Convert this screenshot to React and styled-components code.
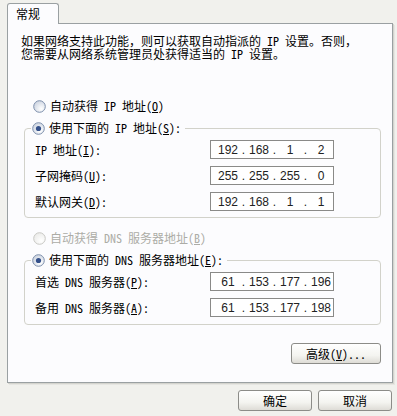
import React from "react";
import styled, { createGlobalStyle } from "styled-components";

const GlobalStyle = createGlobalStyle`
  html, body {
    margin: 0;
    padding: 0;
    background: #f1f1ed;
  }
  body {
    font-family: "Noto Sans Mono CJK SC", "Noto Sans CJK SC", sans-serif;
    font-size: 12px;
    color: #000;
  }
`;

const Window = styled.div`
  width: 397px;
  height: 416px;
  box-sizing: border-box;
  padding-top: 3px;
  overflow: hidden;
`;

const TabStrip = styled.div`
  display: flex;
  padding-left: 7px;
  height: 20px;
`;

const Tab = styled.div`
  position: relative;
  z-index: 1;
  width: 52px;
  height: 21px;
  box-sizing: border-box;
  border: 1px solid #9aa0a2;
  border-bottom: none;
  border-radius: 3px 3px 0 0;
  background: #fcfcfe;
  padding-left: 8px;
  line-height: 19px;
`;

const Panel = styled.div`
  margin-left: 7px;
  width: 386px;
  height: 360px;
  box-sizing: border-box;
  border: 1px solid #9aa0a2;
  background: #fcfcfe;
  box-shadow: 1px 1px 0 #d4d4ce, 2px 2px 0 #e6e6e2;
  display: flex;
  flex-direction: column;
  padding-top: 10px;
`;

const Description = styled.div`
  padding-left: 13px;
  line-height: 13px;
  white-space: nowrap;
`;

const OptionRow = styled.label`
  display: flex;
  align-items: center;
  gap: 4px;
  height: 14px;
  line-height: 14px;
  padding-left: 25px;
  margin-top: ${(p) => p.$top}px;
  color: ${(p) => (p.$disabled ? "#acaca6" : "#000")};
  white-space: nowrap;
`;

const GroupBox = styled.fieldset`
  margin: ${(p) => p.$top}px 0 0 16px;
  width: 357px;
  box-sizing: border-box;
  border: 1px solid #d2d2ca;
  border-radius: 4px;
  padding: 5px 0 ${(p) => p.$bottom}px 6px;
  min-width: 0;
`;

const Legend = styled.legend`
  display: flex;
  align-items: center;
  gap: 4px;
  height: 14px;
  line-height: 14px;
  padding: 0 4px 0 1px;
  white-space: nowrap;
`;

const FieldGrid = styled.div`
  display: grid;
  grid-template-columns: 175px 124px;
  row-gap: 7px;
  padding-left: 4px;
  align-items: center;
`;

const FieldLabel = styled.span`
  white-space: nowrap;
`;

const IpBox = styled.div`
  display: flex;
  align-items: center;
  height: 19px;
  box-sizing: border-box;
  border: 1px solid #8a8a88;
  background: #fff;
  padding-left: 5px;
  font-family: "Liberation Sans", Arial, sans-serif;
  font-size: 12px;
  color: #222;
`;

const Octet = styled.span`
  width: 24px;
  text-align: center;
`;

const Dot = styled.span`
  width: 7px;
  text-align: center;
`;

const Button = styled.button`
  width: ${(p) => p.$w}px;
  height: 21px;
  box-sizing: border-box;
  border: 1px solid #8c8c88;
  border-radius: 3px;
  background: linear-gradient(#ffffff, #f4f4f0 60%, #dedcd6);
  font-family: inherit;
  font-size: 12px;
  color: #000;
  padding: 0;
  line-height: 19px;
`;

const AdvancedRow = styled.div`
  display: flex;
  justify-content: flex-end;
  margin-top: 18px;
  padding-right: 11px;
`;

const Footer = styled.div`
  display: flex;
  justify-content: flex-end;
  gap: 6px;
  margin-top: 7px;
  padding-right: 5px;
`;

function Radio({ checked, disabled }) {
  const stroke = disabled ? "#c8c8c4" : "#7d8fac";
  const id = disabled ? "rgd" : "rg";
  return (
    <svg width="13" height="13" viewBox="0 0 13 13">
      <defs>
        <radialGradient id={id} cx="0.65" cy="0.7" r="0.7">
          <stop offset="0" stopColor="#ffffff" />
          <stop offset="1" stopColor={disabled ? "#ececea" : "#cfd6e2"} />
        </radialGradient>
      </defs>
      <circle cx="6.5" cy="6.5" r="5.8" fill={`url(#${id})`} stroke={stroke} />
      {checked && <circle cx="6.5" cy="6.5" r="2.6" fill="#34508a" />}
    </svg>
  );
}

function IpField({ value }) {
  const parts = value.split(".");
  return (
    <IpBox>
      {parts.map((p, i) => (
        <React.Fragment key={i}>
          {i > 0 && <Dot>.</Dot>}
          <Octet>{p}</Octet>
        </React.Fragment>
      ))}
    </IpBox>
  );
}

const ipRows = [
  { label: "IP 地址", key: "I", value: "192.168.1.2" },
  { label: "子网掩码", key: "U", value: "255.255.255.0" },
  { label: "默认网关", key: "D", value: "192.168.1.1" },
];

const dnsRows = [
  { label: "首选 DNS 服务器", key: "P", value: "61.153.177.196" },
  { label: "备用 DNS 服务器", key: "A", value: "61.153.177.198" },
];

function Fields({ rows }) {
  return (
    <FieldGrid>
      {rows.map(({ label, key, value }) => (
        <React.Fragment key={key}>
          <FieldLabel>
            {label}(<u>{key}</u>):
          </FieldLabel>
          <IpField value={value} />
        </React.Fragment>
      ))}
    </FieldGrid>
  );
}

export default function App() {
  return (
    <Window>
      <GlobalStyle />
      <TabStrip>
        <Tab>常规</Tab>
      </TabStrip>
      <Panel>
        <Description>
          <div>如果网络支持此功能，则可以获取自动指派的 IP 设置。否则，</div>
          <div>您需要从网络系统管理员处获得适当的 IP 设置。</div>
        </Description>
        <OptionRow $top={39}>
          <Radio />
          <span>
            自动获得 IP 地址(<u>O</u>)
          </span>
        </OptionRow>
        <GroupBox $top={8} $bottom={6}>
          <Legend>
            <Radio checked />
            <span>
              使用下面的 IP 地址(<u>S</u>):
            </span>
          </Legend>
          <Fields rows={ipRows} />
        </GroupBox>
        <OptionRow $top={13} $disabled>
          <Radio disabled />
          <span>
            自动获得 DNS 服务器地址(<u>B</u>)
          </span>
        </OptionRow>
        <GroupBox $top={8} $bottom={7}>
          <Legend>
            <Radio checked />
            <span>
              使用下面的 DNS 服务器地址(<u>E</u>):
            </span>
          </Legend>
          <Fields rows={dnsRows} />
        </GroupBox>
        <AdvancedRow>
          <Button $w={90}>
            高级(<u>V</u>)...
          </Button>
        </AdvancedRow>
      </Panel>
      <Footer>
        <Button $w={74}>确定</Button>
        <Button $w={74}>取消</Button>
      </Footer>
    </Window>
  );
}
